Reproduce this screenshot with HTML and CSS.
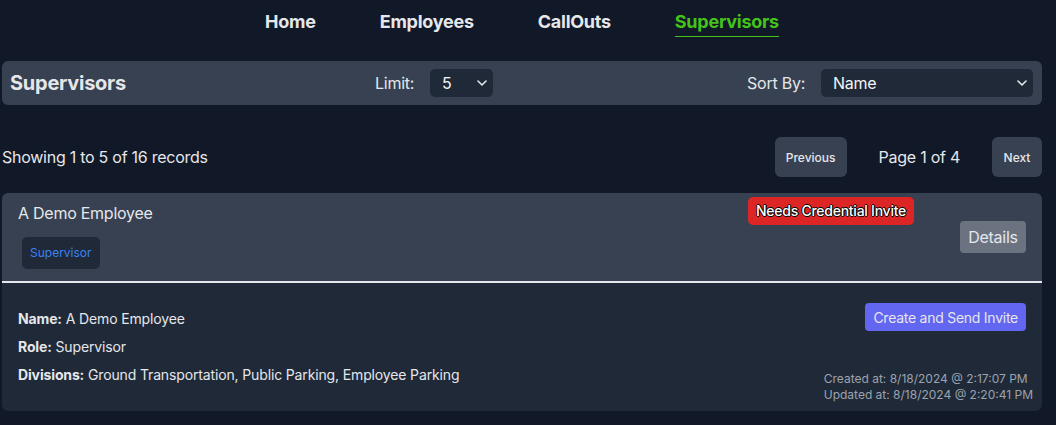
FILE: index.html
```html
<!DOCTYPE html>
<html lang="en">
<head>
<meta charset="utf-8">
<title>Supervisors</title>
<link rel="stylesheet" href="styles.css">
</head>
<body>
<div class="page">
  <nav class="nav">
    <a class="nav-link" href="#">Home</a>
    <a class="nav-link" href="#">Employees</a>
    <a class="nav-link" href="#">CallOuts</a>
    <a class="nav-link active" href="#">Supervisors</a>
  </nav>

  <div class="toolbar">
    <h1 class="toolbar-title">Supervisors</h1>
    <div class="field field--limit">
      <span class="field-label">Limit:</span>
      <div class="select select--limit">
        <span class="select-value">5</span>
        <svg class="chev" viewBox="0 0 10 6" width="10" height="6"><path d="M1 1l4 4 4-4" fill="none" stroke="currentColor" stroke-width="1.6" stroke-linecap="round" stroke-linejoin="round"/></svg>
      </div>
    </div>
    <div class="field field--sort">
      <span class="field-label">Sort By:</span>
      <div class="select select--sort">
        <span class="select-value">Name</span>
        <svg class="chev" viewBox="0 0 10 6" width="10" height="6"><path d="M1 1l4 4 4-4" fill="none" stroke="currentColor" stroke-width="1.6" stroke-linecap="round" stroke-linejoin="round"/></svg>
      </div>
    </div>
  </div>

  <div class="pager-row">
    <span class="showing">Showing 1 to 5 of 16 records</span>
    <div class="pager">
      <button class="pager-btn pager-btn--prev">Previous</button>
      <span class="page-info">Page 1 of 4</span>
      <button class="pager-btn pager-btn--next">Next</button>
    </div>
  </div>

  <div class="card">
    <div class="card-head">
      <div class="card-info">
        <div class="card-name">A Demo Employee</div>
        <div class="tags"><span class="tag">Supervisor</span></div>
      </div>
      <span class="alert-badge">Needs Credential Invite</span>
      <button class="details-btn">Details</button>
    </div>
    <div class="card-body">
      <div class="props">
        <p class="prop"><b>Name:</b> A Demo Employee</p>
        <p class="prop"><b>Role:</b> Supervisor</p>
        <p class="prop"><b>Divisions:</b> Ground Transportation, Public Parking, Employee Parking</p>
      </div>
      <div class="side">
        <button class="invite-btn">Create and Send Invite</button>
        <div class="stamps">
          <div>Created at: 8/18/2024 @ 2:17:07 PM</div>
          <div>Updated at: 8/18/2024 @ 2:20:41 PM</div>
        </div>
      </div>
    </div>
  </div>
</div>
</body>
</html>
```
FILE: styles.css
```css
* { box-sizing: border-box; }
html, body { margin: 0; padding: 0; }
body {
  background: #111827;
  color: #e5e7eb;
  font-family: Inter, "Noto Sans", "Liberation Sans", sans-serif;
  font-size: 16px;
  letter-spacing: -0.016em;
}
button { letter-spacing: inherit; }
.page {
  width: 1040px;
  margin-left: 2px;
}
.nav {
  display: flex;
  justify-content: center;
  padding-top: 10px;
}
.nav-link {
  color: #e5e7eb;
  text-decoration: none;
  font-weight: 700;
  font-size: 18px;
  line-height: 24px;
  padding-bottom: 2px;
  border-bottom: 1px solid transparent;
  margin: 0 32px;
}
.nav-link.active {
  color: #46c31a;
  border-bottom-color: #46c31a;
}
.toolbar {
  margin-top: 24px;
  height: 44px;
  background: #374151;
  border-radius: 6px;
  display: flex;
  align-items: center;
  padding: 0 9px 0 8px;
}
.toolbar-title {
  margin: 0;
  font-size: 20px;
  font-weight: 700;
  color: #e5e7eb;
}
.field {
  display: flex;
  align-items: center;
  gap: 16px;
}
.field--limit { margin-left: auto; margin-right: 254px; }
.field-label { font-size: 16px; color: #e5e7eb; }
.select {
  position: relative;
  height: 28px;
  background: #1f2937;
  border-radius: 5px;
  display: flex;
  align-items: center;
  padding-left: 12px;
  color: #f3f4f6;
}
.select--limit { width: 63px; }
.select--sort { width: 212px; }
.chev {
  position: absolute;
  right: 6px;
  top: 11px;
  color: #e5e7eb;
}
.pager-row {
  margin-top: 32px;
  display: flex;
  align-items: center;
  justify-content: space-between;
}
.showing { font-size: 16px; }
.pager {
  display: flex;
  align-items: center;
  gap: 32px;
}
.pager-btn {
  height: 40px;
  border: 0;
  border-radius: 6px;
  background: #374151;
  color: #e5e7eb;
  font-family: inherit;
  font-size: 12px;
  font-weight: 500;
  letter-spacing: 0;
}
.pager-btn--prev { width: 72px; }
.pager-btn--next { width: 50px; }
.page-info { font-size: 16px; }
.card {
  margin-top: 16px;
  border-radius: 6px;
  overflow: hidden;
}
.card-head {
  position: relative;
  background: #374151;
  display: flex;
  align-items: center;
  justify-content: space-between;
  padding: 8px 16px 12px 16px;
}
.card-name { font-size: 16px; line-height: 24px; }
.tags { display: flex; margin-top: 12px; padding-left: 4px; }
.tag {
  background: #1f2937;
  color: #3b82f6;
  font-size: 12px;
  letter-spacing: 0;
  border-radius: 5px;
  height: 32px;
  line-height: 32px;
  padding: 0 8px;
}
.alert-badge {
  position: absolute;
  top: 4px;
  right: 128px;
  height: 28px;
  line-height: 28px;
  padding: 0 8px;
  background: #dc2626;
  border-radius: 5px;
  color: #fff;
  font-size: 14px;
  font-weight: 500;
  text-shadow: -1px 0 #000, 1px 0 #000, 0 -1px #000, 0 1px #000;
}
.details-btn {
  height: 32px;
  width: 66px;
  border: 0;
  border-radius: 4px;
  background: #6b7280;
  color: #e5e7eb;
  font-family: inherit;
  font-size: 16px;
  margin-top: 4px;
}
.card-body {
  background: #1f2937;
  border-top: 2px solid #e5e7eb;
  display: flex;
  justify-content: space-between;
  padding: 20px 9px 8px 16px;
}
.props { padding-top: 6px; }
.prop {
  margin: 0 0 8px 0;
  font-size: 14px;
  line-height: 20px;
  letter-spacing: -0.01em;
}
.prop b { font-weight: 700; }
.side {
  display: flex;
  flex-direction: column;
  align-items: flex-end;
  justify-content: space-between;
}
.invite-btn {
  height: 28px;
  padding: 0 8px;
  border: 0;
  border-radius: 4px;
  background: #6366f1;
  color: #e5e7eb;
  font-family: inherit;
  font-size: 14px;
  margin-right: 7px;
}
.stamps {
  font-size: 12px;
  line-height: 16px;
  letter-spacing: 0;
  color: #9ca3af;
  margin-top: 40px;
}
```
